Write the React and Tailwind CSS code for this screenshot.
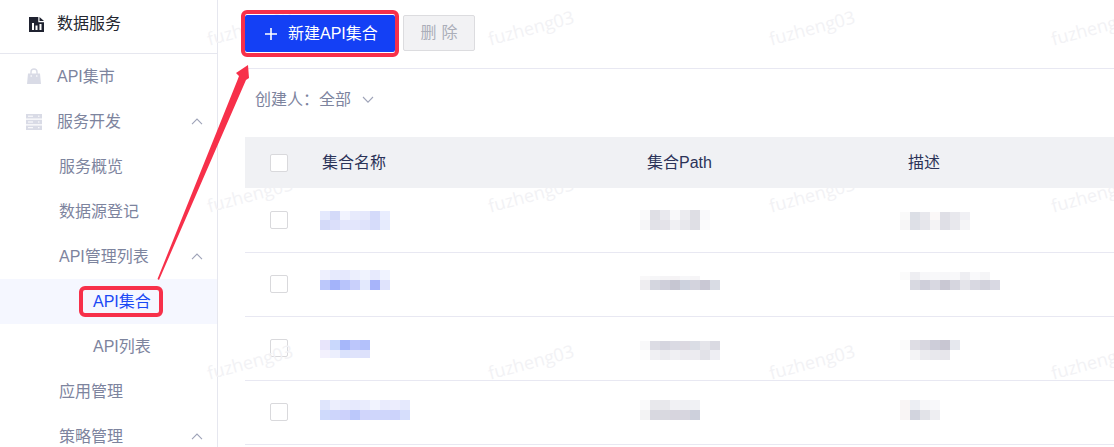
const sans = "font-['Liberation_Sans','Noto_Sans_CJK_SC',sans-serif]";

function Chevron({ up = true, className = "" }) {
  return (
    <svg width="12" height="7" viewBox="0 0 12 7" fill="none" stroke="#9ea3b8" strokeWidth="1.1" className={className}>
      {up ? <path d="M1 6.2 L6 1 L11 6.2" /> : <path d="M1 1 L6 6.2 L11 1" />}
    </svg>
  );
}

function ChartIcon() {
  return (
    <svg width="15" height="15" viewBox="0 0 15 15">
      <path d="M0 0 H9.3 V5.2 H15 V15 H0 Z" fill="#1f2230" />
      <path d="M10.5 0 L15 3.9 H10.5 Z" fill="#1f2230" />
      <rect x="3" y="6" width="2" height="7" fill="#fff" />
      <rect x="6.5" y="8.5" width="2" height="4.5" fill="#fff" />
      <rect x="10.5" y="7" width="2" height="6" fill="#fff" />
    </svg>
  );
}

function BagIcon() {
  return (
    <svg width="16" height="17" viewBox="0 0 16 17">
      <path d="M5 6 V4 a3 3 0 0 1 6 0 V6" fill="none" stroke="#d9dbe6" strokeWidth="1.4" />
      <path d="M2 5.5 H14 L15 16 H1 Z" fill="#d9dbe6" />
      <circle cx="5.2" cy="8" r="0.8" fill="#fff" />
      <circle cx="10.8" cy="8" r="0.8" fill="#fff" />
    </svg>
  );
}

function ServerIcon() {
  return (
    <svg width="16" height="16" viewBox="0 0 16 16">
      <rect x="0" y="0" width="16" height="4.5" fill="#d9dbe6" />
      <rect x="0" y="5.75" width="16" height="4.5" fill="#d9dbe6" />
      <rect x="0" y="11.5" width="16" height="4.5" fill="#d9dbe6" />
      <rect x="2" y="1.7" width="5" height="1" fill="#fff" />
      <rect x="2" y="7.5" width="5" height="1" fill="#fff" />
      <rect x="2" y="13.2" width="5" height="1" fill="#fff" />
      <rect x="12" y="1.7" width="1.5" height="1" fill="#fff" />
      <rect x="12" y="7.5" width="1.5" height="1" fill="#fff" />
      <rect x="12" y="13.2" width="1.5" height="1" fill="#fff" />
    </svg>
  );
}

function Item({ children, pl = "pl-[57px]", chevron, active }) {
  return (
    <div className={`relative z-0 h-[45px] flex items-center shrink-0 ${pl} pr-[14px] text-[16px] ${active ? "bg-[#f5f7ff] text-[#1a48f5]" : "text-[#7d849e]"}`}>
      {children}
      {chevron && <Chevron className="ml-auto" />}
    </div>
  );
}

function Sidebar() {
  return (
    <aside className="w-[218px] shrink-0 h-[447px] overflow-hidden border-r border-[#e6e7ef]">
      <div className="h-[54px] border-b border-[#e6e7ef] flex items-center pl-[29px] pb-[5px] gap-[13px] text-[16px] text-[#23262f]">
        <ChartIcon />
        <span>数据服务</span>
      </div>
      <div>
        <div className="h-[45px] flex items-center pl-[26px] gap-[15px] text-[16px] text-[#7d849e]">
          <BagIcon />
          <span>API集市</span>
        </div>
        <div className="h-[45px] flex items-center pl-[26px] gap-[15px] pr-[14px] text-[16px] text-[#7d849e]">
          <ServerIcon />
          <span>服务开发</span>
          <Chevron className="ml-auto" />
        </div>
        <Item pl="pl-[59px]">服务概览</Item>
        <Item pl="pl-[59px]">数据源登记</Item>
        <Item pl="pl-[59px]" chevron>API管理列表</Item>
        <Item pl="pl-[93px]" active>API集合</Item>
        <Item pl="pl-[93px]">API列表</Item>
        <Item pl="pl-[59px]">应用管理</Item>
        <Item pl="pl-[59px]" chevron>策略管理</Item>
      </div>
    </aside>
  );
}

function Mosaic({ rows, heights }) {
  return (
    <div className="flex flex-col">
      {rows.map((row, i) => (
        <div key={i} className="flex">
          {row.map((c, j) => (
            <div key={j} className="w-[10px]" style={{ height: heights[i], background: c }} />
          ))}
        </div>
      ))}
    </div>
  );
}

function Checkbox() {
  return <div className="w-[18px] h-[18px] rounded-[2px] border border-[#d9d9dc] bg-white shrink-0" />;
}

const data = [
  {
    h: [9, 10],
    nameTop: "pt-[22px]",
    pathTop: "pt-[21px]",
    descTop: "pt-[23px]",
    descH: [8, 10],
    pathH: [10, 10],
    name: [
      ["#e4e9fd", "#d4daf9", "#f1f3fe", "#e7eafc", "#e5e8fc", "#d4dafa", "#e9edfe"],
      ["#d4daf9", "#dbdffa", "#e3e6fc", "#e3e6fc", "#dfe3fb", "#d6dcfa", "#e6ebfd"],
    ],
    path: [
      ["#fafafb", "#dfdfe5", "#e9e9ee", "#f9f9fa", "#ececf0", "#dedee4", "#f9f9fb", "#ffffff"],
      ["#f6f6f8", "#e2e2e8", "#e4e3e9", "#f0f0f3", "#e8e8ed", "#dfdfe5", "#fbfbfc", "#ffffff"],
    ],
    desc: [
      ["#fafafa", "#dcdfe6", "#e8e8ed", "#fbf8f8", "#dfdfe6", "#e8e8ed", "#f0f0f4"],
      ["#f7f6f7", "#dee0e7", "#e6e6eb", "#f4f3f5", "#dfdfe6", "#e8e8ed", "#f5f5f7"],
    ],
  },
  {
    h: [10, 10],
    nameTop: "pt-[17px]",
    pathTop: "pt-[23px]",
    descTop: "pt-[19px]",
    descH: [8, 10],
    pathH: [4, 10],
    name: [
      ["#eef0fe", "#e6eafd", "#e5e8fd", "#eceffd", "#f0f3fe", "#e7eafd", "#f0f3ff"],
      ["#bcc8fb", "#a3b3fa", "#b8c4fb", "#c9d0fb", "#e3e9fd", "#a7b4fa", "#dfe3fc"],
    ],
    path: [
      ["#f9f8f9", "#f6f6f8", "#f5f4f6", "#f5f3f5", "#f7f7f9", "#f6f5f7", "#ffffff", "#ffffff"],
      ["#eeedf0", "#d4d6df", "#cfcfda", "#c6c6d2", "#cdd2de", "#d3d3dd", "#c9c8d4", "#d9dce4"],
    ],
    desc: [
      ["#fbfbfb", "#eeeef2", "#f7f7f9", "#f8f8fa", "#f7f7f9", "#f8f8fa", "#eeeef2", "#f9f9fb", "#f5f5f7", "#ffffff"],
      ["#ffffff", "#d8d9e1", "#cfcfda", "#d8d8e1", "#c9c8d3", "#d6d6df", "#e4e4ea", "#d8d8e1", "#d2d2dc", "#d9d9e3"],
    ],
  },
  {
    h: [10, 8],
    nameTop: "pt-[23px]",
    pathTop: "pt-[24px]",
    descTop: "pt-[23px]",
    descH: [10, 10],
    pathH: [9, 10],
    name: [
      ["#e8e5fb", "#c9d8fc", "#a6b7fa", "#bcc6fb", "#b3c1fb"],
      ["#f3f1fd", "#eceffd", "#dae2fc", "#dfe3fb", "#dde1fb"],
    ],
    path: [
      ["#f9f9fa", "#dcdce4", "#d5d5df", "#dadae3", "#dcd9e1", "#dadde5", "#e5e5ea", "#dadae2"],
      ["#fdfdfd", "#f0f0f3", "#ebebef", "#f0f0f3", "#ecebf0", "#ecebf0", "#e2e2e8", "#eeeef3"],
    ],
    desc: [
      ["#fbfbfb", "#dedde4", "#d8d7e0", "#cdcdd9", "#c8c6d2", "#e6e8ee"],
      ["#ffffff", "#f4f4f6", "#ebebef", "#e8e8ed", "#e7e6eb", "#ffffff"],
    ],
  },
  {
    h: [10, 10],
    nameTop: "pt-[19px]",
    pathTop: "pt-[19px]",
    descTop: "pt-[19px]",
    descH: [10, 10],
    pathH: [10, 10],
    name: [
      ["#dfe5fc", "#eceefd", "#e8ebfd", "#e6e9fd", "#e9ecfd", "#f1f3fe", "#e9ebfd", "#ecedfd", "#e5e9fd"],
      ["#cfdafc", "#cdd5fb", "#ccd1fb", "#bbc8fb", "#d0d5fb", "#cfd6fb", "#cfd6fb", "#ccd3fb", "#d6defc"],
    ],
    path: [
      ["#fafafb", "#e8e8ec", "#e8e8ec", "#f1f1f4", "#eff0f3", "#f0f1f4"],
      ["#f3f3f4", "#d8d8e0", "#d9d9e0", "#d7d5de", "#d7d6df", "#cdd0dc"],
    ],
    desc: [
      ["#f9f5f5", "#eceef3", "#f7f7f9", "#f8f8fa"],
      ["#f9f5f5", "#d2d4de", "#e2e3e8", "#eeeef2"],
    ],
  },
];

function Row({ d }) {
  return (
    <div className="h-[64px] border-b border-[#e8e8f2] flex items-start">
      <div className="w-[75px] shrink-0 pl-[25px] pt-[22px]">
        <Checkbox />
      </div>
      <div className={`w-[320px] shrink-0 ${d.nameTop}`}>
        <Mosaic rows={d.name} heights={d.h} />
      </div>
      <div className={`w-[260px] shrink-0 ${d.pathTop}`}>
        <Mosaic rows={d.path} heights={d.pathH} />
      </div>
      <div className={d.descTop}>
        <Mosaic rows={d.desc} heights={d.descH} />
      </div>
    </div>
  );
}

const marks = [
  [250, 28], [531, 28], [812, 28], [1094, 28],
  [250, 195], [531, 195], [812, 195], [1094, 195],
  [250, 362], [531, 362], [812, 362], [1094, 362],
];

export default function App() {
  return (
    <div className={`relative w-[1114px] h-[447px] overflow-hidden bg-white flex ${sans}`}>
      <Sidebar />
      <main className="flex-1 min-w-0 pl-[27px]">
        <div className="h-[69px] border-b border-[#e8e8f2] pt-[15px] flex items-start gap-[8px]">
          <button className="relative z-10 w-[150px] h-[37px] rounded-[2px] bg-[#1440f5] text-white text-[16px] flex items-center pl-[20px] gap-[11px]">
            <svg width="12" height="12" viewBox="0 0 12 12" stroke="#fff" strokeWidth="1.6"><path d="M6 0 V12 M0 6 H12" /></svg>
            <span>新建API集合</span>
          </button>
          <button className="relative z-10 w-[72px] h-[36px] rounded-[2px] bg-[#f2f2f4] border border-[#dcdcdf] text-[#abaeb9] text-[16px] flex items-center justify-center gap-[5px]">
            <span>删</span><span>除</span>
          </button>
        </div>
        <div className="h-[68px] flex items-center pl-[10px] pb-[7px] gap-[11px] text-[16px] text-[#7d849e]">
          <span>创建人：全部</span>
          <Chevron up={false} />
        </div>
        <div className="relative z-10 h-[51px] bg-[#f0f1f4] flex items-center text-[16px] text-[#2b3358]">
          <div className="w-[77px] shrink-0 pl-[25px]"><Checkbox /></div>
          <div className="w-[325px] shrink-0">集合名称</div>
          <div className="w-[261px] shrink-0">集合Path</div>
          <div>描述</div>
        </div>
        <div className="pt-[1px]">
          {data.map((d, i) => <Row key={i} d={d} />)}
        </div>
      </main>

      {marks.map(([x, y], i) => (
        <span
          key={i}
          style={{ left: x, top: y }}
          className="absolute -translate-x-1/2 -translate-y-1/2 -rotate-[15deg] text-[18px] text-[#f2f2f5] font-['Open_Sans',sans-serif] pointer-events-none whitespace-nowrap"
        >
          fuzheng03
        </span>
      ))}

      {/* annotation */}
      <div className="absolute z-20 left-[241px] top-[10px] w-[158px] h-[47px] rounded-[6px] border-[4px] border-[#f7304a] pointer-events-none" />
      <div className="absolute z-20 left-[79px] top-[286px] w-[84px] h-[31px] rounded-[6px] border-[4px] border-[#f7304a] pointer-events-none" />
      <svg className="absolute z-20 left-0 top-0 pointer-events-none" width="1114" height="447">
        <polygon points="157.5,279 159,280 246,80 249,78 248,65 236,73 239,76 237.5,80" fill="#f7304a" />
      </svg>
    </div>
  );
}
